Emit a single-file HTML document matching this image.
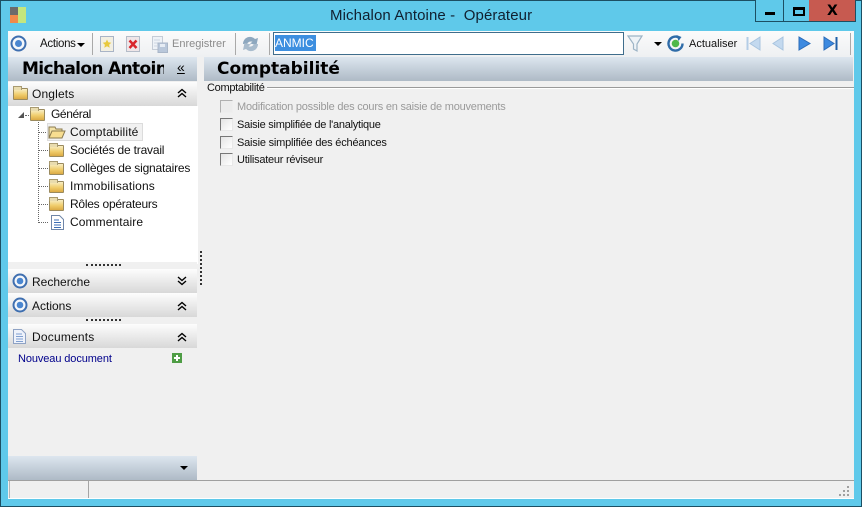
<!DOCTYPE html>
<html><head><meta charset="utf-8">
<style>
html,body{margin:0;padding:0;width:862px;height:507px;overflow:hidden;background:#5fc9ea}
*{box-sizing:border-box}
.a{position:absolute}
.t{position:absolute;white-space:nowrap;font:12px/14px "Liberation Sans",sans-serif;color:#111}
.c{font-size:11px;letter-spacing:-.22px}
.h{position:absolute;left:8px;width:189px;background:linear-gradient(#fdfdfd,#d8d8d8)}
.f{position:absolute;width:15px;height:12px;background:linear-gradient(#f8eec4,#f0cd6c 55%,#dcaa45);border:1px solid #9a8a5e;border-radius:1px}
.f:before{content:"";position:absolute;left:-1px;top:-3px;width:7px;height:3px;background:#e9dcae;border:1px solid #a89a70;border-bottom:0}
.cb{position:absolute;left:220px;width:13px;height:13px;background:linear-gradient(135deg,#e4e4e4,#fff);border:1px solid;border-color:#777 #e8e8e8 #e8e8e8 #777}
.dv{position:absolute;width:1px;background:#a9a9a9}
.dot{position:absolute;border-top:1px dotted #666;height:0}
.dotv{position:absolute;border-left:1px dotted #666;width:0}
</style></head><body>
<div class="a" style="left:0;top:0;width:862px;height:507px;border:1px solid #1c4f63"></div>

<!-- title bar -->
<div class="a" style="left:10px;top:7px;width:8px;height:8px;background:#6b6b6b"></div>
<div class="a" style="left:10px;top:15px;width:8px;height:8px;background:#f08a4b"></div>
<div class="a" style="left:18px;top:7px;width:8px;height:16px;background:#c4e67e"></div>
<div class="t" style="left:330px;top:7px;font-size:15px;line-height:18px;letter-spacing:.1px;color:#102030;white-space:pre">Michalon Antoine -  Opérateur</div>

<div class="a" style="left:755px;top:0;width:101px;height:22px;border:1px solid #1c4f63;border-top:0;background:#5fc9ea"></div>
<div class="a" style="left:783px;top:0;width:1px;height:21px;background:#1c4f63"></div>
<div class="a" style="left:809px;top:0;width:46px;height:21px;background:#c75a50"></div>
<div class="a" style="left:765px;top:12px;width:10px;height:3px;background:#000"></div>
<div class="a" style="left:793px;top:7px;width:12px;height:9px;border:2px solid #000;border-top-width:3px"></div>
<div class="t" style="left:827px;top:3px;font:bold 14px/16px 'DejaVu Sans',sans-serif;color:#000">X</div>

<!-- client -->
<div class="a" style="left:8px;top:31px;width:846px;height:468px;background:#f0f0f0"></div>

<!-- toolbar -->
<div class="a" style="left:8px;top:31px;width:846px;height:26px;background:linear-gradient(#fbfbfb,#eef0f2)"></div>
<svg class="a" style="left:10px;top:35px" width="17" height="17"><circle cx="8.500" cy="8.500" r="7" fill="#f4f7fb" stroke="#3f6fb0" stroke-width="2"/><circle cx="8.500" cy="8.500" r="3.500" fill="#4a86d0"/></svg>
<div class="t" style="left:40px;top:37px;font-size:11.500px;letter-spacing:-.3px">Actions</div>
<div class="a" style="left:77px;top:43px;border:4px solid transparent;border-top-color:#000;border-bottom:0"></div>
<div class="dv" style="left:92px;top:33px;height:22px"></div>
<svg class="a" style="left:100px;top:36px" width="14" height="16"><rect x=".5" y=".5" width="13" height="15" fill="#f2efe2" stroke="#a9b4c6"/><path d="M7 3.500l1.300 2.800 3 .4-2.200 2 .6 3L7 10.300 4.300 11.700l.6-3-2.200-2 3-.4z" fill="#e8c93e"/></svg>
<svg class="a" style="left:126px;top:36px" width="14" height="16"><rect x=".5" y=".5" width="13" height="15" fill="#efe6e8" stroke="#b4bcc8"/><path d="M3.500 4.500l7 7.500M10.500 4.500l-7 7.500" stroke="#d8262c" stroke-width="2.500"/></svg>
<svg class="a" style="left:152px;top:36px" width="16" height="17"><rect x=".5" y=".5" width="10" height="13" fill="#eef2f7" stroke="#c5ccd6"/><path d="M2 4h6M2 7h6M2 10h3" stroke="#cdd6e2"/><rect x="6" y="7" width="9.500" height="9.500" fill="#b9c7da" stroke="#a9b6c8"/><rect x="8" y="8" width="5" height="3" fill="#e6ecf4"/></svg>
<div class="t" style="left:172px;top:37px;color:#8b8b8b;font-size:11px">Enregistrer</div>
<div class="dv" style="left:235px;top:33px;height:22px"></div>
<svg class="a" style="left:242px;top:35px" width="17" height="18"><path d="M1 9a7 7 0 0 1 12-5l3-1-1.500 7-6.500-1.500 2.500-1.800A4.500 4.500 0 0 0 5 9z" fill="#8ea8bf"/><path d="M16 9a7 7 0 0 1-12 5l-3 1 1.500-7L9 9.500 6.500 11.300A4.500 4.500 0 0 0 12 9z" fill="#a9bccd"/></svg>
<div class="dv" style="left:269px;top:33px;height:22px"></div>
<div class="a" style="left:273px;top:32px;width:351px;height:23px;background:#fff;border:1px solid #3f6d8c"></div>
<div class="a" style="left:275px;top:35px;width:41px;height:16px;background:#3d8fe0"></div>
<div class="t" style="left:275px;top:36px;color:#fff">ANMIC</div>
<svg class="a" style="left:627px;top:35px" width="16" height="18"><path d="M1 1h14L10 9v7L6.500 14V9z" fill="#eef3f7" stroke="#9db4c6" stroke-width="1.200"/></svg>
<div class="a" style="left:654px;top:42px;border:4px solid transparent;border-top-color:#000;border-bottom:0"></div>
<svg class="a" style="left:667px;top:35px" width="17" height="17"><path d="M12 2.500A7 7 0 1 0 15.500 8.500" fill="none" stroke="#2f6ca8" stroke-width="2.400"/><path d="M9.500 0l5 2-3 4z" fill="#2f6ca8"/><circle cx="8.500" cy="8.500" r="3.800" fill="#4fb848"/></svg>
<div class="t" style="left:689px;top:37px;font-size:11px">Actualiser</div>
<svg class="a" style="left:745px;top:35px" width="100" height="18">
<path d="M2.500 2v13" stroke="#b4cde6" stroke-width="2"/><path d="M15 2v13L5 8.500z" fill="#c3d9ef" stroke="#a8c4df"/>
<path d="M38 2v13L28 8.500z" fill="#c3d9ef" stroke="#a8c4df"/>
<path d="M54 2v13l11-6.500z" fill="#3d8ae0" stroke="#2c6cb8"/>
<path d="M79 2v13l10-6.500z" fill="#3d8ae0" stroke="#2c6cb8"/><path d="M91.500 2v13" stroke="#1f5fa8" stroke-width="2"/>
</svg>
<div class="dv" style="left:850px;top:33px;height:22px"></div>

<!-- headers -->
<div class="a" style="left:8px;top:57px;width:189px;height:24px;background:linear-gradient(#dde6ef,#aebac6)"></div>
<div class="a" style="left:204px;top:57px;width:649px;height:24px;background:linear-gradient(#dde6ef,#aebac6)"></div>
<div class="a" style="left:8px;top:57px;width:156px;height:24px;overflow:hidden"><div class="t" style="left:14px;top:1px;font:bold 17px/22px 'DejaVu Sans',sans-serif;letter-spacing:-.65px;color:#000">Michalon Antoine</div></div>
<div class="t" style="left:177px;top:61px;font:14px/12px 'Liberation Sans',sans-serif;color:#000;text-decoration:underline">«</div>
<div class="t" style="left:217px;top:58px;font:bold 17px/22px 'DejaVu Sans',sans-serif;color:#000">Comptabilité</div>

<!-- left panel -->
<div class="h" style="top:82px;height:24px"></div>
<div class="f" style="left:13px;top:88px"></div>
<div class="t" style="left:32px;top:87px;letter-spacing:.15px">Onglets</div>
<svg class="a" style="left:177px;top:88px" width="10" height="10"><path d="M1 5l4-3.500L9 5M1 9l4-3.500L9 9" fill="none" stroke="#000" stroke-width="1.400"/></svg>

<div class="a" style="left:8px;top:106px;width:190px;height:158px;background:#fff"></div>
<div class="a" style="left:18px;top:112px;border-style:solid;border-width:0 0 6px 6px;border-color:transparent transparent #555 transparent"></div>
<div class="dot" style="left:25px;top:115px;width:4px"></div>
<div class="f" style="left:30px;top:109px"></div>
<div class="t" style="left:51px;top:107px;letter-spacing:-.4px">Général</div>
<div class="dotv" style="left:38px;top:122px;height:101px"></div>
<div class="dot" style="left:39px;top:132px;width:9px"></div>
<div class="dot" style="left:39px;top:150px;width:9px"></div>
<div class="dot" style="left:39px;top:168px;width:9px"></div>
<div class="dot" style="left:39px;top:186px;width:9px"></div>
<div class="dot" style="left:39px;top:204px;width:9px"></div>
<div class="dot" style="left:39px;top:222px;width:9px"></div>

<div class="a" style="left:47px;top:123px;width:96px;height:18px;background:#f1f1f1;border:1px solid #dcdcdc"></div>
<svg class="a" style="left:48px;top:126px" width="18" height="13"><path d="M1 12V1h6l1 2h6v2" fill="#f3e2a6" stroke="#8a7a50"/><path d="M1 12l3-7h13l-3 7z" fill="#f7dd90" stroke="#8a7a50"/></svg>
<div class="t" style="left:70px;top:125px;letter-spacing:.15px">Comptabilité</div>
<div class="f" style="left:49px;top:145px"></div>
<div class="t" style="left:70px;top:143px;letter-spacing:-.2px">Sociétés de travail</div>
<div class="f" style="left:49px;top:163px"></div>
<div class="t" style="left:70px;top:161px;letter-spacing:-.2px">Collèges de signataires</div>
<div class="f" style="left:49px;top:181px"></div>
<div class="t" style="left:70px;top:179px;letter-spacing:.15px">Immobilisations</div>
<div class="f" style="left:49px;top:199px"></div>
<div class="t" style="left:70px;top:197px;letter-spacing:-.25px">Rôles opérateurs</div>
<svg class="a" style="left:51px;top:215px" width="13" height="15"><path d="M.5.5h8l4 4v10H.5z" fill="#fff" stroke="#6f86a8"/><path d="M3 5h5M3 7.500h7M3 10h7M3 12.500h7" stroke="#3b6db5"/></svg>
<div class="t" style="left:70px;top:215px;letter-spacing:.1px">Commentaire</div>

<div class="a" style="left:8px;top:262px;width:189px;height:7px;background:#f0f0f0"></div>
<div class="dot" style="left:86px;top:264px;width:35px;border-top:2px dotted #333"></div>
<div class="dotv" style="left:200px;top:251px;height:34px;border-left:2px dotted #333"></div>

<div class="h" style="top:269px;height:24px"></div>
<svg class="a" style="left:12px;top:273px" width="16" height="16"><circle cx="8" cy="8" r="6.500" fill="#f4f7fb" stroke="#3f6fb0" stroke-width="2"/><circle cx="8" cy="8" r="3.300" fill="#4a86d0"/></svg>
<div class="t" style="left:32px;top:275px">Recherche</div>
<svg class="a" style="left:177px;top:276px" width="10" height="10"><path d="M1 1l4 3.500L9 1M1 5l4 3.500L9 5" fill="none" stroke="#000" stroke-width="1.400"/></svg>

<div class="h" style="top:293px;height:24px"></div>
<svg class="a" style="left:12px;top:297px" width="16" height="16"><circle cx="8" cy="8" r="6.500" fill="#f4f7fb" stroke="#3f6fb0" stroke-width="2"/><circle cx="8" cy="8" r="3.300" fill="#4a86d0"/></svg>
<div class="t" style="left:32px;top:299px">Actions</div>
<svg class="a" style="left:177px;top:301px" width="10" height="10"><path d="M1 5l4-3.500L9 5M1 9l4-3.500L9 9" fill="none" stroke="#000" stroke-width="1.400"/></svg>

<div class="dot" style="left:86px;top:319px;width:35px;border-top:2px dotted #333"></div>

<div class="h" style="top:324px;height:24px"></div>
<svg class="a" style="left:13px;top:329px" width="13" height="15"><path d="M.5.5h8l4 4v10H.5z" fill="#eef2fb" stroke="#8ea2c4"/><path d="M3 5h6M3 7.500h7M3 10h7M3 12.500h7" stroke="#7f9fd0"/></svg>
<div class="t" style="left:32px;top:330px;letter-spacing:.2px">Documents</div>
<svg class="a" style="left:177px;top:332px" width="10" height="10"><path d="M1 5l4-3.500L9 5M1 9l4-3.500L9 9" fill="none" stroke="#000" stroke-width="1.400"/></svg>

<div class="t" style="left:18px;top:352px;color:#00008b;font-size:11px;letter-spacing:-.1px">Nouveau document</div>
<div class="a" style="left:172px;top:353px;width:10px;height:10px;background:#4f9d45"></div>
<div class="a" style="left:176px;top:355px;width:2px;height:6px;background:#fff"></div>
<div class="a" style="left:174px;top:357px;width:6px;height:2px;background:#fff"></div>

<div class="a" style="left:8px;top:456px;width:189px;height:24px;background:linear-gradient(#dde6ef,#aebac6)"></div>
<div class="a" style="left:180px;top:466px;border:4px solid transparent;border-top-color:#000;border-bottom:0"></div>

<!-- content -->
<div class="a" style="left:267px;top:87px;width:587px;height:1px;background:#9a9a9a"></div>
<div class="a" style="left:267px;top:88px;width:587px;height:1px;background:#fff"></div>
<div class="t c" style="left:207px;top:81px;letter-spacing:-.3px">Comptabilité</div>
<div class="cb" style="top:100px;background:#ececec;border-color:#b0b0b0 #eee #eee #b0b0b0"></div>
<div class="t c" style="left:237px;top:100px;color:#9a9a9a">Modification possible des cours en saisie de mouvements</div>
<div class="cb" style="top:118px"></div>
<div class="t c" style="left:237px;top:118px;letter-spacing:-.25px">Saisie simplifiée de l'analytique</div>
<div class="cb" style="top:136px"></div>
<div class="t c" style="left:237px;top:136px;letter-spacing:-.2px">Saisie simplifiée des échéances</div>
<div class="cb" style="top:153px"></div>
<div class="t c" style="left:237px;top:153px;letter-spacing:-.25px">Utilisateur réviseur</div>

<!-- status bar -->
<div class="a" style="left:8px;top:480px;width:846px;height:1px;background:#a0a0a0"></div>
<div class="a" style="left:8px;top:481px;width:846px;height:18px;background:#f0f0f0;border-bottom:1px solid #fff"></div>
<div class="a" style="left:9px;top:481px;width:1px;height:17px;background:#b5b5b5"></div>
<div class="a" style="left:88px;top:481px;width:1px;height:17px;background:#a5a5a5"></div>
<svg class="a" style="left:838px;top:486px" width="14" height="11" fill="#a0a0a0"><rect x="9" y="0" width="2" height="2"/><rect x="5" y="4" width="2" height="2"/><rect x="9" y="4" width="2" height="2"/><rect x="1" y="8" width="2" height="2"/><rect x="5" y="8" width="2" height="2"/><rect x="9" y="8" width="2" height="2"/></svg>
</body></html>
